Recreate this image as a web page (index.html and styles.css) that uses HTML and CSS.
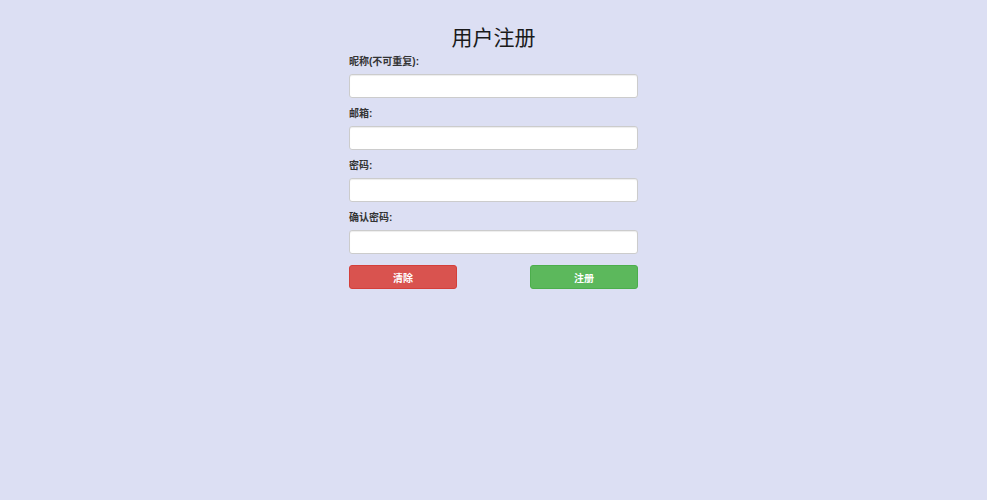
FILE: index.html
```html
<!DOCTYPE html>
<html lang="zh-CN">
<head>
    <meta charset="UTF-8">
    <meta name="viewport" content="width=device-width, initial-scale=1.0">
    <title>用户注册</title>
    <link rel="stylesheet" href="styles.css">
</head>
<body>

    <div class="register">
        <h1 class="register-title">用户注册</h1>
        <form class="register-form" onsubmit="return false">
            <div class="field">
                <label for="nickname">昵称(不可重复):</label>
                <input type="text" id="nickname">
            </div>
            <div class="field">
                <label for="email">邮箱:</label>
                <input type="text" id="email">
            </div>
            <div class="field">
                <label for="password">密码:</label>
                <input type="password" id="password">
            </div>
            <div class="field">
                <label for="confirm">确认密码:</label>
                <input type="password" id="confirm">
            </div>
            <div class="actions">
                <button type="reset" class="btn btn-clear">清除</button>
                <button type="submit" class="btn btn-submit">注册</button>
            </div>
        </form>
    </div>

</body>
</html>
```

FILE: styles.css
```css
body {
    margin: 0;
    background-color: #dcdff3;
    font-family: "Liberation Sans", "Noto Sans CJK SC", sans-serif;
    color: #333;
}

.register {
    width: 289px;
    margin: 0 auto;
    padding-top: 24px;
}

.register-title {
    margin: 0 0 2px;
    font-family: "Liberation Serif", "Noto Sans CJK SC", serif;
    font-size: 21px;
    font-weight: normal;
    line-height: 28px;
    text-align: center;
    color: #1a1a1a;
}

.field {
    margin-bottom: 8px;
}

.field label {
    display: block;
    font-size: 10px;
    font-weight: bold;
    line-height: 16px;
    margin-bottom: 4px;
}

.field input {
    display: block;
    box-sizing: border-box;
    width: 100%;
    height: 24px;
    border: 1px solid #ccc;
    border-radius: 3px;
    background-color: #fff;
    box-shadow: inset 0 1px 1px rgba(0, 0, 0, 0.075);
}

.actions {
    display: flex;
    justify-content: space-between;
    margin-top: 11px;
}

.btn {
    width: 108px;
    height: 24px;
    border: 1px solid transparent;
    border-radius: 3px;
    color: white;
    font-family: inherit;
    font-size: 10px;
    font-weight: bold;
    cursor: pointer;
}

.btn-clear {
    background-color: #d9534f;
    border-color: #d43f3a;
}

.btn-submit {
    background-color: #5cb85c;
    border-color: #4cae4c;
}
```
